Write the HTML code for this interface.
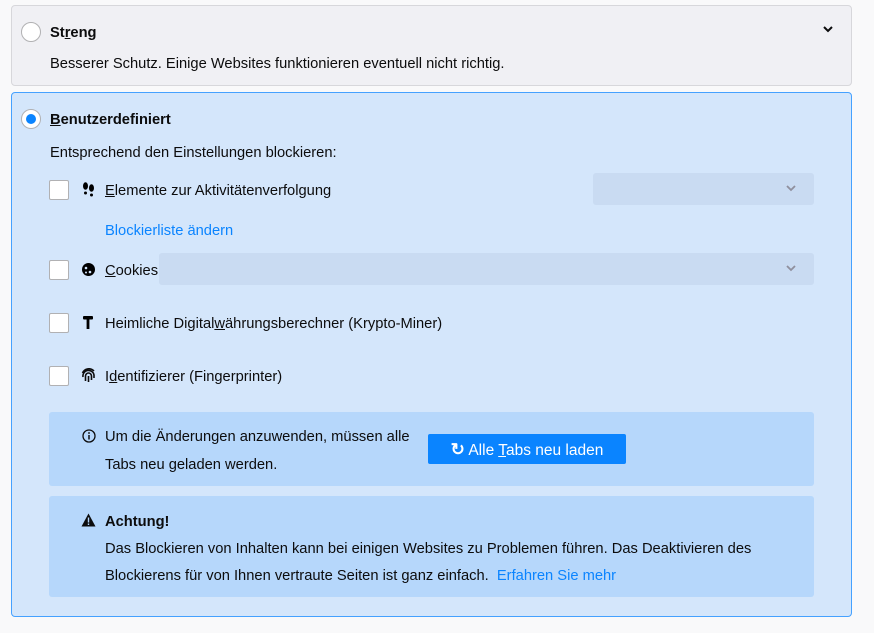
<!DOCTYPE html>
<html><head><meta charset="utf-8"><style>
*{box-sizing:border-box;margin:0;padding:0}
body{width:874px;height:633px;background:#f9f9fa;font-family:"Liberation Sans",sans-serif;font-size:14.7px;color:#0c0c0d;position:relative;overflow:hidden}
.abs{position:absolute;white-space:nowrap}
.t{margin-top:1px}
.card1{position:absolute;left:11px;top:5px;width:841px;height:81px;background:#f0f0f4;border:1px solid #d7d7db;border-radius:4px}
.card2{position:absolute;left:11px;top:92px;width:841px;height:525px;background:#d4e6fb;border:1px solid #45a1ff;border-radius:4px}
.radio{position:absolute;width:20px;height:20px;border-radius:50%;background:#fff;border:1px solid #b1b1b3}
.cb{position:absolute;left:49px;width:20px;height:20px;background:#fff;border:1px solid #b1b1b3;border-radius:2px}
.dd{position:absolute;background:#c9dbf2;border-radius:3px}
.box{position:absolute;left:49px;width:765px;background:#b6d7fb;border-radius:3px}
u{text-decoration:underline}
.btn{position:absolute;left:428px;top:434px;width:198px;height:30px;background:#0a84ff;color:#fff;border-radius:2px;font-size:15.5px;line-height:31px;text-align:center}
</style></head><body>
<div class="card1"></div>
<div class="radio" style="left:21px;top:22px"></div>
<div class="abs" style="left:50px;top:25px;font-weight:bold">St<u>r</u>eng</div>
<svg class="abs" style="left:822px;top:25px" width="12" height="8"><path d="M2 2l4 4 4-4" stroke="#0c0c0d" stroke-width="2" fill="none"/></svg>
<div class="abs" style="left:50px;top:56px">Besserer Schutz. Einige Websites funktionieren eventuell nicht richtig.</div>

<div class="card2"></div>
<div class="radio" style="left:21px;top:109px"></div>
<div class="abs" style="left:26px;top:114px;width:10px;height:10px;border-radius:50%;background:#0a84ff"></div>
<div class="abs" style="left:50px;top:112px;font-weight:bold"><u>B</u>enutzerdefiniert</div>
<div class="abs" style="left:50px;top:145px">Entsprechend den Einstellungen blockieren:</div>

<div class="cb" style="top:180px"></div>
<svg class="abs" style="left:82px;top:182px" width="13" height="15"><ellipse cx="3.5" cy="4" rx="2.5" ry="3.8"/><ellipse cx="9.5" cy="6" rx="2.5" ry="3.8"/><rect x="2" y="9.5" width="3" height="3" rx="1.5"/><rect x="8" y="11.5" width="3" height="3" rx="1.5"/></svg>
<div class="abs" style="left:105px;top:183px"><u>E</u>lemente zur Aktivitätenverfolgung</div>
<div class="dd" style="left:593px;top:173px;width:221px;height:32px"></div>
<svg class="abs" style="left:786px;top:185px" width="10" height="7"><path d="M1 1l4 4 4-4" stroke="#8f8f9d" stroke-width="1.8" fill="none"/></svg>
<div class="abs" style="left:105px;top:223px;color:#0a84ff">Blockierliste ändern</div>

<div class="cb" style="top:260px"></div>
<svg class="abs" style="left:81px;top:262px" width="15" height="15"><circle cx="7.5" cy="7.5" r="6.5"/><circle cx="5" cy="6" r="1.3" fill="#d4e6fb"/><circle cx="9" cy="10" r="1.3" fill="#d4e6fb"/><circle cx="5" cy="10.5" r="1" fill="#d4e6fb"/></svg>
<div class="abs" style="left:105px;top:263px"><u>C</u>ookies</div>
<div class="dd" style="left:159px;top:253px;width:655px;height:32px"></div>
<svg class="abs" style="left:786px;top:265px" width="10" height="7"><path d="M1 1l4 4 4-4" stroke="#8f8f9d" stroke-width="1.8" fill="none"/></svg>

<div class="cb" style="top:313px"></div>
<svg class="abs" style="left:83px;top:316px" width="10" height="13"><rect x="0" y="0" width="10" height="3.5" rx="1"/><rect x="3.6" y="2" width="2.8" height="11"/></svg>
<div class="abs" style="left:105px;top:316px">Heimliche Digital<u>w</u>ährungsberechner (Krypto-Miner)</div>

<div class="cb" style="top:366px"></div>
<svg class="abs" style="left:81px;top:368px" width="15" height="15" fill="none" stroke="#0c0c0d" stroke-width="1.6"><path d="M2 9a5.5 5.5 0 0 1 11-2v3M4.5 13V8a3 3 0 0 1 6 0v4M7.5 8v6M1.5 5A7 7 0 0 1 13 3"/></svg>
<div class="abs" style="left:105px;top:369px">I<u>d</u>entifizierer (Fingerprinter)</div>

<div class="box" style="top:412px;height:74px"></div>
<svg class="abs" style="left:82px;top:429px" width="14" height="14"><circle cx="7" cy="7" r="6" fill="none" stroke="#0c0c0d" stroke-width="1.3"/><rect x="6.3" y="6" width="1.4" height="4.5"/><circle cx="7" cy="4" r="0.9"/></svg>
<div class="abs" style="left:105px;top:429px">Um die Änderungen anzuwenden, müssen alle</div>
<div class="abs" style="left:105px;top:457px">Tabs neu geladen werden.</div>
<div class="btn"><span style="font-weight:bold;font-size:17px">↻</span> Alle <u>T</u>abs neu laden</div>

<div class="box" style="top:496px;height:101px"></div>
<svg class="abs" style="left:81px;top:513px" width="15" height="14"><path d="M7.5 0.5L14.5 13.5H0.5Z" fill="#0c0c0d"/><rect x="6.8" y="4.5" width="1.4" height="5" fill="#b6d7fb"/><rect x="6.8" y="10.5" width="1.4" height="1.5" fill="#b6d7fb"/></svg>
<div class="abs" style="left:105px;top:514px;font-weight:bold">Achtung!</div>
<div class="abs" style="left:105px;top:541px">Das Blockieren von Inhalten kann bei einigen Websites zu Problemen führen. Das Deaktivieren des</div>
<div class="abs" style="left:105px;top:568px">Blockierens für von Ihnen vertraute Seiten ist ganz einfach. &nbsp;<span style="color:#0a84ff">Erfahren Sie mehr</span></div>
</body></html>
